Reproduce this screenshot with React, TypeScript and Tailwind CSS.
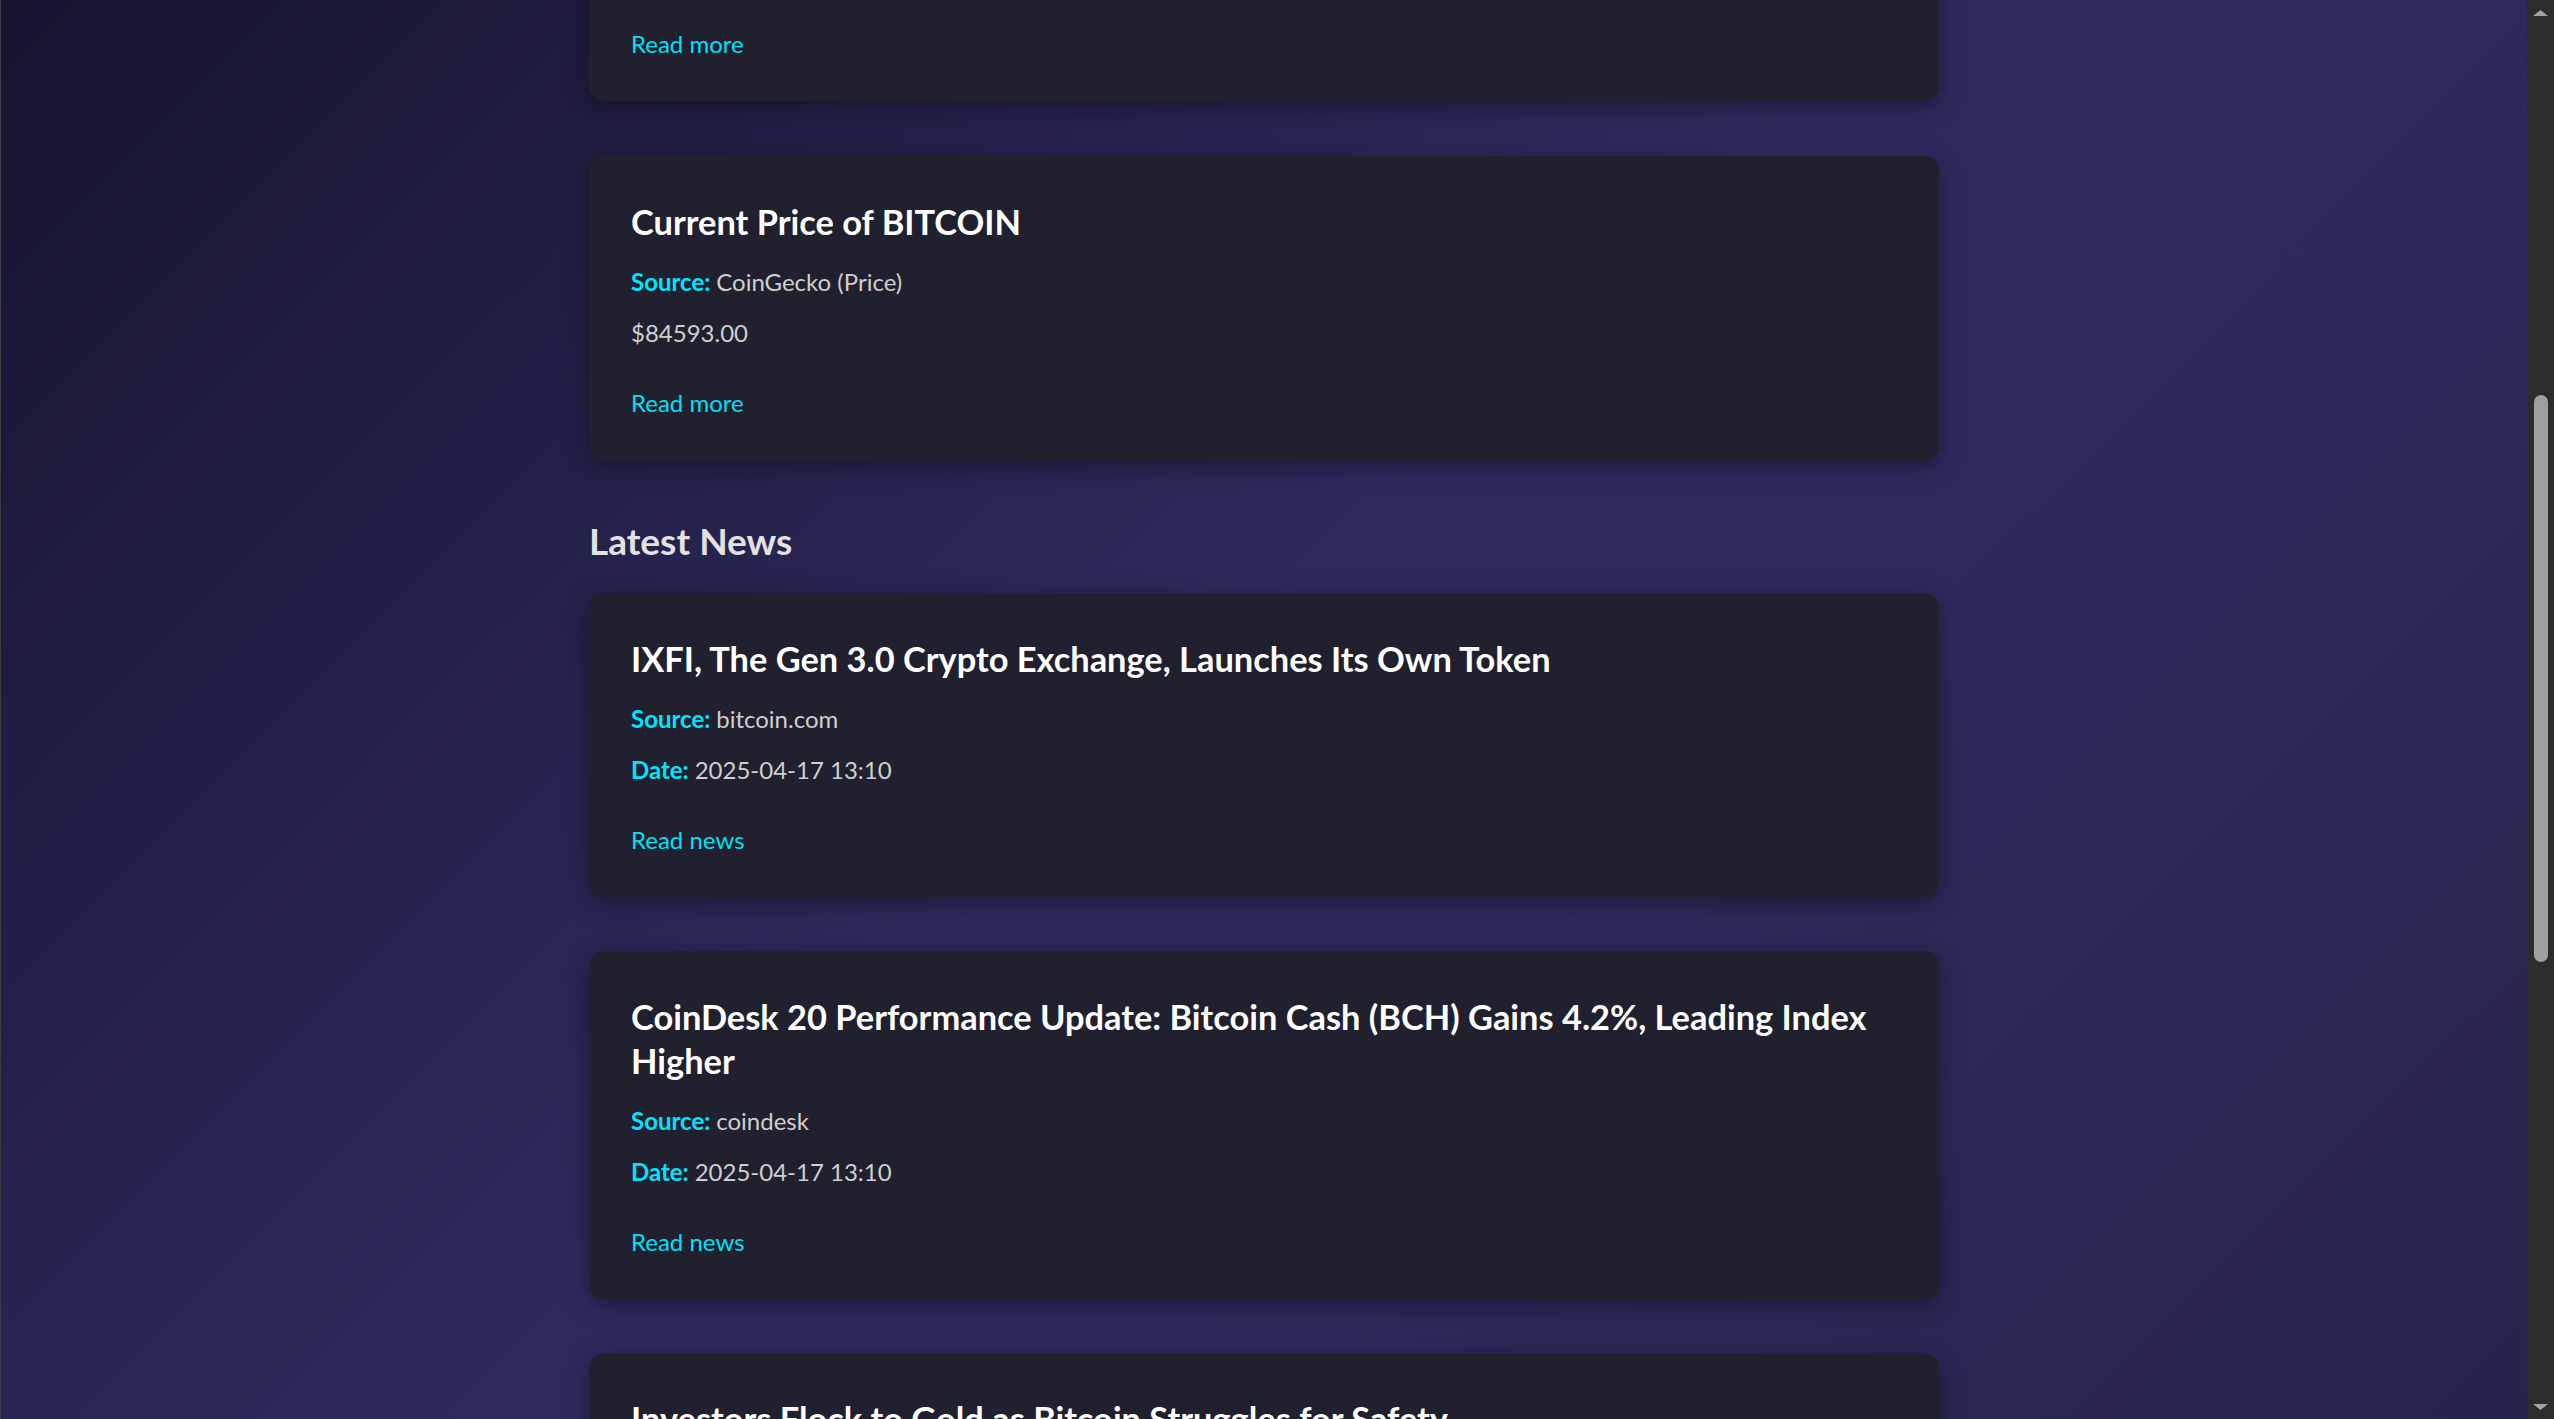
const news = [
  { title: "IXFI, The Gen 3.0 Crypto Exchange, Launches Its Own Token", source: "bitcoin.com", date: "2025-04-17 13:10" },
  { title: "CoinDesk 20 Performance Update: Bitcoin Cash (BCH) Gains 4.2%, Leading Index Higher", source: "coindesk", date: "2025-04-17 13:10" },
  { title: "Investors Flock to Gold as Bitcoin Struggles for Safety", source: "coindesk", date: "2025-04-17 13:05" },
]

function Card({ children, className = "" }: { children: React.ReactNode; className?: string }) {
  return (
    <div className={"bg-[#20202e] rounded-[15px] px-[42px] pb-[42px] shadow-[0_6px_24px_rgba(0,0,0,0.35)] " + className}>
      {children}
    </div>
  )
}

function Title({ text }: { text: string }) {
  return <h3 className="text-white font-bold text-[34.4px] leading-[44px] mb-[22px]">{text}</h3>
}

function Row({ label, value }: { label?: string; value: string }) {
  return (
    <p className="text-[24px] leading-[32px] text-[#cfcfcf]">
      {label && <span className="font-bold text-[#00e5ff]">{label} </span>}
      {value}
    </p>
  )
}

function Scrollbar() {
  return (
    <div className="w-[27px] h-full bg-[#2c2c2c] flex flex-col shrink-0">
      <div className="h-[25px] flex items-center justify-center">
        <svg width="15" height="6" viewBox="0 0 15 6"><path d="M0 6 L7.5 0 L15 6 Z" fill="#a3a3a3" /></svg>
      </div>
      <div className="flex-1 pt-[370px]">
        <div className="mx-auto w-[14px] h-[567px] rounded-full bg-[#9f9f9f]" />
      </div>
      <div className="h-[25px] flex items-center justify-center">
        <svg width="15" height="6" viewBox="0 0 15 6"><path d="M0 0 L7.5 6 L15 0 Z" fill="#a3a3a3" /></svg>
      </div>
    </div>
  )
}

export default function App() {
  return (
    <div className="flex w-full h-[1419px] overflow-hidden font-['Lato',sans-serif] border-l border-[#3d3d47]">
      <div className="flex-1 h-full overflow-hidden bg-[linear-gradient(135deg,#16142f_0%,#2e2a5e_48%,#2e2a5e_62%,#27244b_100%)]">
        <div className="w-[1350px] mx-auto mt-[-100px] flex flex-col">
          {/* previous price card, scrolled mostly out of view */}
          <div className="mb-[55px]">
            <Card className="pt-[128px] !pb-[41px]">
              <a className="block text-[24px] leading-[32px] text-[#00e0f4]">Read more</a>
            </Card>
          </div>
          <div className="mb-[55px]">
            <Card className="pt-[44px]">
              <Title text="Current Price of BITCOIN" />
              <div className="flex flex-col gap-[19px]">
                <Row label="Source:" value="CoinGecko (Price)" />
                <Row value="$84593.00" />
              </div>
              <a className="block mt-[38px] text-[24px] leading-[32px] text-[#00e0f4]">Read more</a>
            </Card>
          </div>
          <h2 className="text-[37px] leading-[46px] font-bold text-[#e2e2e2] mt-[2px] mb-[29px]">Latest News</h2>
          {news.map((n) => (
            <div key={n.title} className="mb-[53px]">
              <Card className="pt-[44px]">
                <Title text={n.title} />
                <div className="flex flex-col gap-[19px]">
                  <Row label="Source:" value={n.source} />
                  <Row label="Date:" value={n.date} />
                </div>
                <a className="block mt-[38px] text-[24px] leading-[32px] text-[#00e0f4]">Read news</a>
              </Card>
            </div>
          ))}
        </div>
      </div>
      <Scrollbar />
    </div>
  )
}
